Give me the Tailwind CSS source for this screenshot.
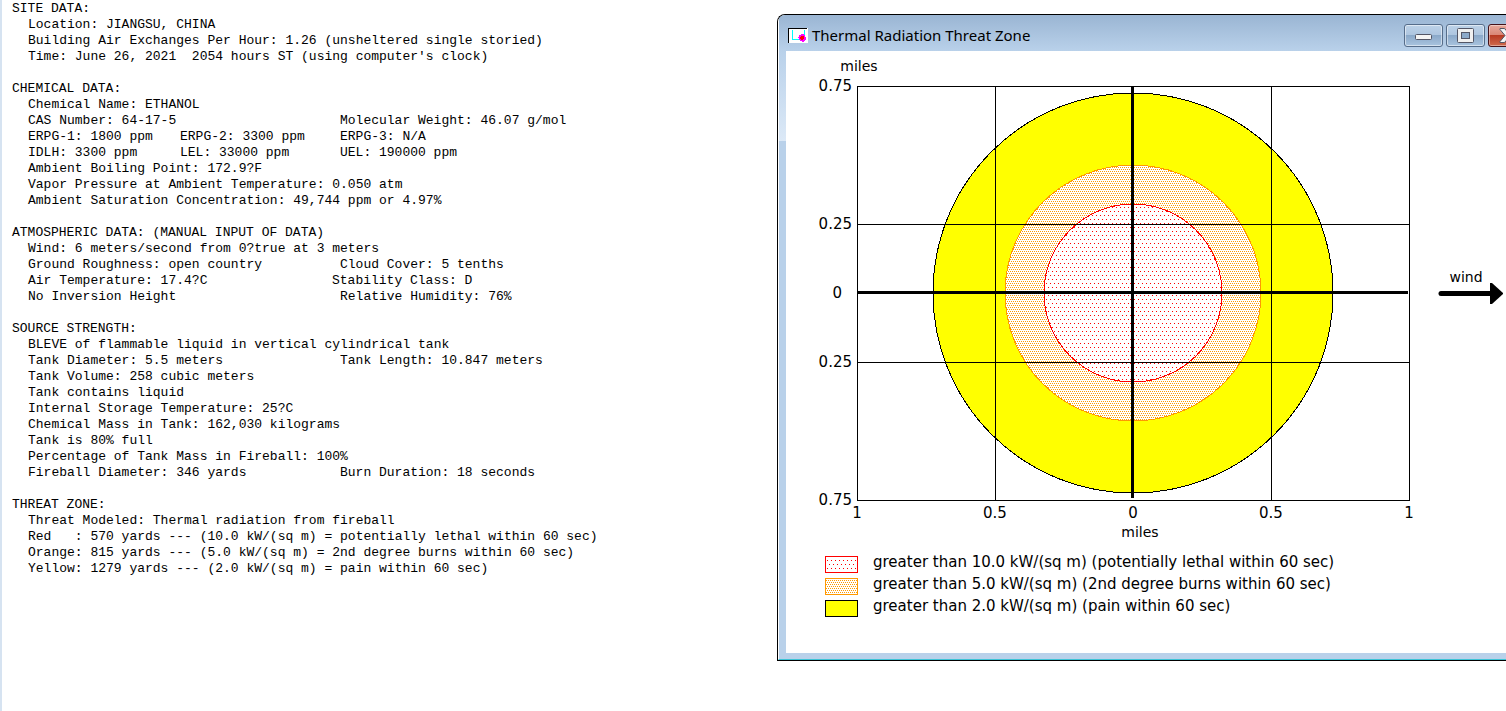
<!DOCTYPE html>
<html lang="en">
<head>
<meta charset="UTF-8">
<meta name="viewport" content="width=device-width, initial-scale=1.0">
<title>Thermal Radiation Threat Zone</title>
<script src="https://cdn.jsdelivr.net/npm/@tailwindcss/browser@4"></script>
</head>
<body class="bg-white text-black min-h-screen grid grid-cols-[777fr_729fr] overflow-x-hidden">
<main class="min-w-0 border-l-2 border-[#d6e3f1] pl-[10px] pt-px space-y-4 whitespace-nowrap text-[13px] leading-4 font-['Liberation_Mono',monospace]">
<section>
<h2>SITE DATA:</h2>
<div class="pl-4">
<p>Location: JIANGSU, CHINA</p>
<p>Building Air Exchanges Per Hour: 1.26 (unsheltered single storied)</p>
<p>Time: June 26, 2021&nbsp; 2054 hours ST (using computer's clock)</p>
</div>
</section>
<section>
<h2>CHEMICAL DATA:</h2>
<div class="pl-4">
<p>Chemical Name: ETHANOL</p>
<p class="flex"><span class="w-[312px]">CAS Number: 64-17-5</span><span>Molecular Weight: 46.07 g/mol</span></p>
<p class="flex"><span class="w-[152px]">ERPG-1: 1800 ppm</span><span class="w-[160px]">ERPG-2: 3300 ppm</span><span>ERPG-3: N/A</span></p>
<p class="flex"><span class="w-[152px]">IDLH: 3300 ppm</span><span class="w-[160px]">LEL: 33000 ppm</span><span>UEL: 190000 ppm</span></p>
<p>Ambient Boiling Point: 172.9?F</p>
<p>Vapor Pressure at Ambient Temperature: 0.050 atm</p>
<p>Ambient Saturation Concentration: 49,744 ppm or 4.97%</p>
</div>
</section>
<section>
<h2>ATMOSPHERIC DATA: (MANUAL INPUT OF DATA)</h2>
<div class="pl-4">
<p>Wind: 6 meters/second from 0?true at 3 meters</p>
<p class="flex"><span class="w-[312px]">Ground Roughness: open country</span><span>Cloud Cover: 5 tenths</span></p>
<p class="flex"><span class="w-[304px]">Air Temperature: 17.4?C</span><span>Stability Class: D</span></p>
<p class="flex"><span class="w-[312px]">No Inversion Height</span><span>Relative Humidity: 76%</span></p>
</div>
</section>
<section>
<h2>SOURCE STRENGTH:</h2>
<div class="pl-4">
<p>BLEVE of flammable liquid in vertical cylindrical tank</p>
<p class="flex"><span class="w-[312px]">Tank Diameter: 5.5 meters</span><span>Tank Length: 10.847 meters</span></p>
<p>Tank Volume: 258 cubic meters</p>
<p>Tank contains liquid</p>
<p>Internal Storage Temperature: 25?C</p>
<p>Chemical Mass in Tank: 162,030 kilograms</p>
<p>Tank is 80% full</p>
<p>Percentage of Tank Mass in Fireball: 100%</p>
<p class="flex"><span class="w-[312px]">Fireball Diameter: 346 yards</span><span>Burn Duration: 18 seconds</span></p>
</div>
</section>
<section>
<h2>THREAT ZONE:</h2>
<div class="pl-4">
<p>Threat Modeled: Thermal radiation from fireball</p>
<p>Red&nbsp;&nbsp; : 570 yards --- (10.0 kW/(sq m) = potentially lethal within 60 sec)</p>
<p>Orange: 815 yards --- (5.0 kW/(sq m) = 2nd degree burns within 60 sec)</p>
<p>Yellow: 1279 yards --- (2.0 kW/(sq m) = pain within 60 sec)</p>
</div>
</section>
</main>
<section class="min-w-0 self-start mt-[14px] overflow-hidden rounded-tl-lg border border-r-0 border-black">
<div class="border-l border-l-white border-b border-b-[#3cc3d6] bg-[linear-gradient(to_bottom,#9ab5d3_0,#b9d1ea_36px,#dce9f7_126px,#b9d1ea_126px)]">
<header class="flex h-9 items-center pt-1 pl-[9px]">
<svg class="w-5 h-[15px] shrink-0" viewBox="0 0 20 15" shape-rendering="crispEdges" aria-hidden="true">
<rect width="20" height="15" fill="#fff"/>
<path d="M.5 15V.5H19" fill="none" stroke="#000"/>
<path d="M4.500 2v9.500H13M16.500 2v5" fill="none" stroke="#0ff"/>
<path d="M13 6h3v1h1v2h1v3h-1v1h-1v1h-2v-1h-2v-1h-1v-2h-1V9h1V7h2z" fill="#f0f"/>
<path d="M13 8h3v3h-1v1h-2v-1h-1V9h1z" fill="#f00"/>
</svg>
<h1 class="ml-1 min-w-0 flex-1 text-[15px] whitespace-nowrap font-['Noto_Sans',sans-serif]">Thermal Radiation Threat Zone</h1>
<div class="flex shrink-0 gap-[3px] -mr-[21px]">
<button type="button" aria-label="Minimize" class="h-[23px] w-[39px] rounded-[3px] border border-[#566d8a] bg-[linear-gradient(to_bottom,#bdd2e8_0,#adc5df_50%,#8ba9c9_50%,#a9c4df_100%)] inset-ring inset-ring-white/50">
<svg class="mx-auto w-[17px] h-[15px]" viewBox="0 0 17 15"><rect x=".5" y="6.500" width="16" height="5" rx="1" fill="#f4f4f4" stroke="#535666"/></svg>
</button>
<button type="button" aria-label="Maximize" class="h-[23px] w-[39px] rounded-[3px] border border-[#566d8a] bg-[linear-gradient(to_bottom,#bdd2e8_0,#adc5df_50%,#8ba9c9_50%,#a9c4df_100%)] inset-ring inset-ring-white/50">
<svg class="mx-auto w-[17px] h-[15px]" viewBox="0 0 17 15"><rect x=".5" y=".5" width="16" height="14" rx="1" fill="#f0f0f0" stroke="#535666"/><rect x="4.500" y="4.500" width="8" height="6" fill="#8ba9c9" stroke="#535666"/></svg>
</button>
<button type="button" aria-label="Close" class="h-[23px] w-[39px] rounded-[3px] border border-[#43121a] bg-[linear-gradient(to_bottom,#e6a99c_0,#d98473_50%,#b73a22_50%,#cf6a4d_100%)] inset-ring inset-ring-white/40">
<svg class="mx-auto w-[17px] h-[15px]" viewBox="0 0 17 15"><path d="M1 .5h4.500l3 3.500 3-3.500H16v1L11 7.500l5 6v1h-4.500l-3-3.500-3 3.500H1v-1l5-6-5-6z" fill="#f4f4f4" stroke="#535666" stroke-linejoin="round"/></svg>
</button>
</div>
</header>
<div class="ml-[7px] mb-[6px] bg-white pb-9 font-['DejaVu_Sans',Verdana,sans-serif] text-[15px]">
<svg class="block w-full h-auto" viewBox="0 0 720 492" role="img" aria-label="Thermal radiation threat zones in miles">
<defs>
<pattern id="lethal" width="4" height="8" patternUnits="userSpaceOnUse">
<rect width="4" height="8" fill="#fff"/>
<path d="M2 4h1v1H2zM0 0h1v1H0z" fill="#f00"/>
</pattern>
<pattern id="burns" width="2" height="4" patternUnits="userSpaceOnUse">
<rect width="2" height="4" fill="#fff"/>
<path d="M0 0h1v1H0zM1 2h1v1H1z" fill="#ff9900"/>
</pattern>
</defs>
<!-- zones, widest first -->
<g shape-rendering="crispEdges">
<circle cx="347" cy="242" r="200" fill="#ff0" stroke="#000"/>
<circle cx="347" cy="242" r="128" fill="url(#burns)" stroke="#ff9900"/>
<circle cx="347" cy="242" r="89" fill="url(#lethal)" stroke="#f00"/>
<path d="M71.500 35.500h552v414h-552zM209.500 35v414M485.500 35v414M71 173.500h552M71 311.500h552" fill="none" stroke="#000"/>
<path d="M346.500 35v412M71 241.500h551" stroke="#000" stroke-width="3"/>
</g>
<g text-anchor="end">
<text x="66" y="40">0.75</text>
<text x="66" y="178">0.25</text>
<text x="56" y="247">0</text>
<text x="66" y="316">0.25</text>
<text x="66" y="454">0.75</text>
</g>
<g text-anchor="middle">
<text x="71" y="467">1</text>
<text x="209" y="467">0.5</text>
<text x="347" y="467">0</text>
<text x="485" y="467">0.5</text>
<text x="623" y="467">1</text>
</g>
<g class="text-[14px]" text-anchor="middle">
<text x="73" y="20">miles</text>
<text x="354" y="486">miles</text>
<text x="680" y="231">wind</text>
</g>
<path d="M655 242.500h50" stroke="#000" stroke-width="5" stroke-linecap="round"/>
<path d="M704 232h2l11 10v1l-11 10h-2z"/>
</svg>
<ul class="pt-2 pl-[39px] leading-[22px]">
<li class="flex items-end gap-[15px]">
<svg class="h-[17px] w-[33px] shrink-0" viewBox="0 0 33 17" shape-rendering="crispEdges" aria-hidden="true"><rect x=".5" y=".5" width="32" height="16" fill="url(#lethal)" stroke="#f00"/></svg>
greater than 10.0 kW/(sq m) (potentially lethal within 60 sec)
</li>
<li class="flex items-end gap-[15px]">
<svg class="h-[17px] w-[33px] shrink-0" viewBox="0 0 33 17" shape-rendering="crispEdges" aria-hidden="true"><rect x=".5" y=".5" width="32" height="16" fill="url(#burns)" stroke="#ff9900"/></svg>
greater than 5.0 kW/(sq m) (2nd degree burns within 60 sec)
</li>
<li class="flex items-end gap-[15px]">
<svg class="h-[17px] w-[33px] shrink-0" viewBox="0 0 33 17" shape-rendering="crispEdges" aria-hidden="true"><rect x=".5" y=".5" width="32" height="16" fill="#ff0" stroke="#000"/></svg>
greater than 2.0 kW/(sq m) (pain within 60 sec)
</li>
</ul>
</div>
</div>
</section>
</body>
</html>
